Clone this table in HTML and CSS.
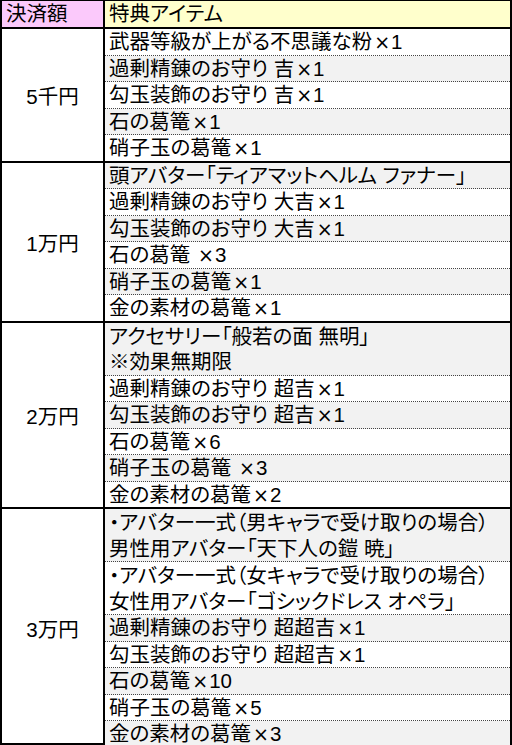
FILE: index.html
```html
<!DOCTYPE html>
<html lang="ja">
<head>
<meta charset="utf-8">
<title>特典アイテム</title>
<link rel="stylesheet" href="styles.css">
</head>
<body>
<div class="sheet">
  <div class="head">
    <div class="h-amount">決済額</div>
    <div class="h-items">特典アイテム</div>
  </div>
  <div class="group">
    <div class="amount">5千円</div>
    <div class="items">
      <div class="item">武器等級が上がる不思議な粉<span class="x">×</span>1</div>
      <div class="item alt">過剰精錬のお守り 吉<span class="x">×</span>1</div>
      <div class="item">勾玉装飾のお守り 吉<span class="x">×</span>1</div>
      <div class="item alt">石の葛篭<span class="x">×</span>1</div>
      <div class="item">硝子玉の葛篭<span class="x">×</span>1</div>
    </div>
  </div>
  <div class="group">
    <div class="amount">1万円</div>
    <div class="items">
      <div class="item alt">頭アバター「ティアマットヘルム ファナー」</div>
      <div class="item">過剰精錬のお守り 大吉<span class="x">×</span>1</div>
      <div class="item alt">勾玉装飾のお守り 大吉<span class="x">×</span>1</div>
      <div class="item">石の葛篭 <span class="x">×</span>3</div>
      <div class="item alt">硝子玉の葛篭<span class="x">×</span>1</div>
      <div class="item">金の素材の葛篭<span class="x">×</span>1</div>
    </div>
  </div>
  <div class="group">
    <div class="amount">2万円</div>
    <div class="items">
      <div class="item two alt">アクセサリー「般若の面 無明」<br>※効果無期限</div>
      <div class="item">過剰精錬のお守り 超吉<span class="x">×</span>1</div>
      <div class="item alt">勾玉装飾のお守り 超吉<span class="x">×</span>1</div>
      <div class="item">石の葛篭<span class="x">×</span>6</div>
      <div class="item alt">硝子玉の葛篭 <span class="x">×</span>3</div>
      <div class="item">金の素材の葛篭<span class="x">×</span>2</div>
    </div>
  </div>
  <div class="group">
    <div class="amount">3万円</div>
    <div class="items">
      <div class="item two alt">・アバター一式（男キャラで受け取りの場合）<br>男性用アバター「天下人の鎧 暁」</div>
      <div class="item two">・アバター一式（女キャラで受け取りの場合）<br>女性用アバター「ゴシックドレス オペラ」</div>
      <div class="item alt">過剰精錬のお守り 超超吉<span class="x">×</span>1</div>
      <div class="item">勾玉装飾のお守り 超超吉<span class="x">×</span>1</div>
      <div class="item alt">石の葛篭<span class="x">×</span>10</div>
      <div class="item">硝子玉の葛篭<span class="x">×</span>5</div>
      <div class="item alt">金の素材の葛篭<span class="x">×</span>3</div>
    </div>
  </div>
</div>
</body>
</html>
```
FILE: styles.css
```css
html, body {
  margin: 0;
  padding: 0;
  background: #fff;
}
body {
  width: 512px;
  height: 745px;
  overflow: hidden;
  font-family: "Liberation Sans", "Noto Sans CJK JP", sans-serif;
  font-size: 20.5px;
  color: #000;
  font-feature-settings: "palt";
}
.sheet {
  box-sizing: border-box;
  width: 512px;
  height: 745px;
  border: 2px solid #000;
  border-top-width: 1px;
  display: flex;
  flex-direction: column;
}
.head {
  display: flex;
  height: 26px;
  border-bottom: 2px solid #000;
  line-height: 26px;
}
.h-amount {
  width: 103px;
  flex: none;
  background: #fbc9fb;
  border-right: 2px solid #000;
  padding-left: 4px;
  box-sizing: border-box;
}
.h-items {
  flex: 1;
  background: #ffffcc;
  padding-left: 4px;
}
.group {
  display: flex;
  border-bottom: 2px solid #000;
}
.group:last-child {
  border-bottom: none;
  flex: 1;
}
.amount {
  width: 103px;
  flex: none;
  box-sizing: border-box;
  border-right: 2px solid #000;
  display: flex;
  align-items: center;
  justify-content: center;
}
.items {
  flex: 1;
  display: flex;
  flex-direction: column;
}
.item {
  line-height: 24.5px;
  padding-top: 1px;
  padding-left: 4px;
  border-bottom: 1px dotted #444;
  white-space: nowrap;
  background: #fff;
}
.item.two {
  line-height: 25.5px;
}
.item:last-child {
  border-bottom: none;
}
.item.alt {
  background: #f2f2f2;
}
.group:last-child .item:last-child {
  flex: 1;
}
.x {
  font-family: "DejaVu Sans", sans-serif;
  font-size: 19px;
  margin: 0 1px 0 2px;
}
```
